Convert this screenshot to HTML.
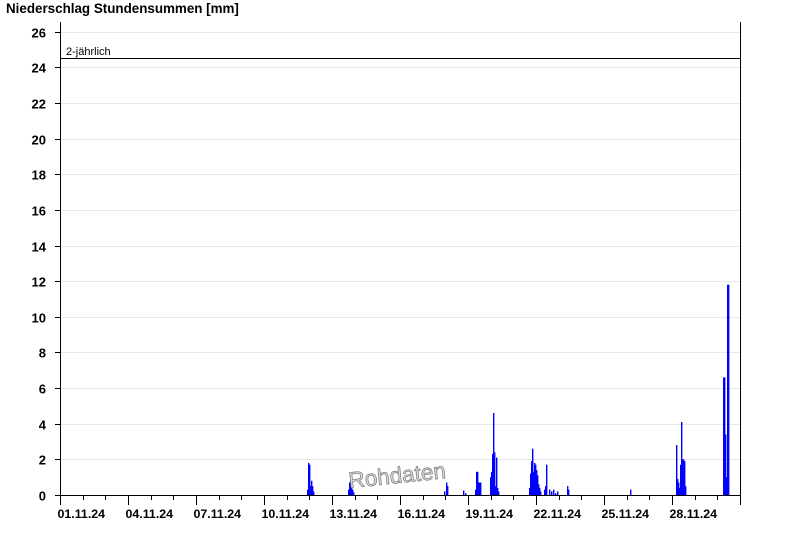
<!DOCTYPE html>
<html><head><style>body{margin:0;background:#fff}svg{display:block;font-family:"Liberation Sans",sans-serif}</style></head><body>
<svg width="800" height="550" viewBox="0 0 800 550">
<text x="6" y="13" font-size="13.4" font-weight="bold">Niederschlag Stundensummen [mm]</text>
<g id="grid" stroke="#e8e8e8" stroke-width="1"></g>
<g id="bars" fill="#0000ff"></g>
<line x1="60" y1="58.5" x2="740" y2="58.5" stroke="#000"/>
<text x="66" y="55" font-size="11">2-jährlich</text>
<g stroke="#000" stroke-width="1">
<line x1="60.5" y1="22" x2="60.5" y2="495"/>
<line x1="740.5" y1="22" x2="740.5" y2="495"/>
<line x1="55" y1="495.5" x2="741" y2="495.5"/>
</g>
<g id="ax" font-size="13" font-weight="bold"></g>
<text x="348" y="483" font-size="22.5" fill="#ddd" stroke="#777" stroke-width="0.7" transform="rotate(-6 398 472)">Rohdaten</text>
<script>
var g=document.getElementById('grid'),a=document.getElementById('ax'),b=document.getElementById('bars'),ns='http://www.w3.org/2000/svg';
function el(p,t,o,txt){var e=document.createElementNS(ns,t);for(var k in o)e.setAttribute(k,o[k]);if(txt)e.textContent=txt;p.appendChild(e);}
for(var v=0;v<=26;v+=2){var y=495-v*17.82;y=Math.round(y)+0.5;if(v>0)el(g,'line',{x1:61,x2:740,y1:y,y2:y});el(a,'line',{x1:55,x2:60,y1:y,y2:y,stroke:'#000'});el(a,'text',{x:46,y:y+5,'text-anchor':'end'},''+v);}
for(var d=0;d<=30;d++){var x=Math.round(60+d*22.67)+0.5;var big=d%3==0;el(a,'line',{x1:x,x2:x,y1:495,y2:big?505:500,stroke:'#000'});if(big&&d<30){var dd=d+1;el(a,'text',{x:x-3,y:518,'font-size':12.4},(dd<10?'0':'')+dd+'.11.24');}}
var bars=[[307,.3],[308,1.8],[309,1.7],[310,.5],[311,.8],[312,.5],[313,.2],
[348,.3],[349,.7],[350,1.1],[351,.5],[352,.3],[353,.15],
[444,.2],[446,.7],[447,.5],[463,.25],[465,.1],
[475,.3],[476,1.3],[477,1.3],[478,.7],[479,.7],[480,.7],
[490,1],[491,1.3],[492,2.3],[493,4.6],[494,2.4],[495,.5],[496,2.1],[497,.4],[498,.2],
[529,.4],[530,1.2],[531,1.9],[532,2.6],[533,1.3],[534,1.8],[535,1.7],[536,1.4],[537,1.1],[538,.6],[539,.4],[540,.2],[544,.3],[545,.5],[546,1.7],
[549,.3],[551,.2],[553,.3],[555,.1],[557,.2],[567,.5],[568,.3],[630,.3],
[676,2.8],[677,.9],[678,.7],[679,.4],[680,1.7],[681,4.1],[682,2],[683,2],[684,1.9],[685,.5],
[723,6.6],[724,6.6],[725,3.4],[726,1],[727,11.8],[728,11.8]];
bars.forEach(function(p){var h=p[1]*17.82;el(b,'rect',{x:p[0],y:495-h,width:1.4,height:h});});
</script>
</svg>
</body></html>
